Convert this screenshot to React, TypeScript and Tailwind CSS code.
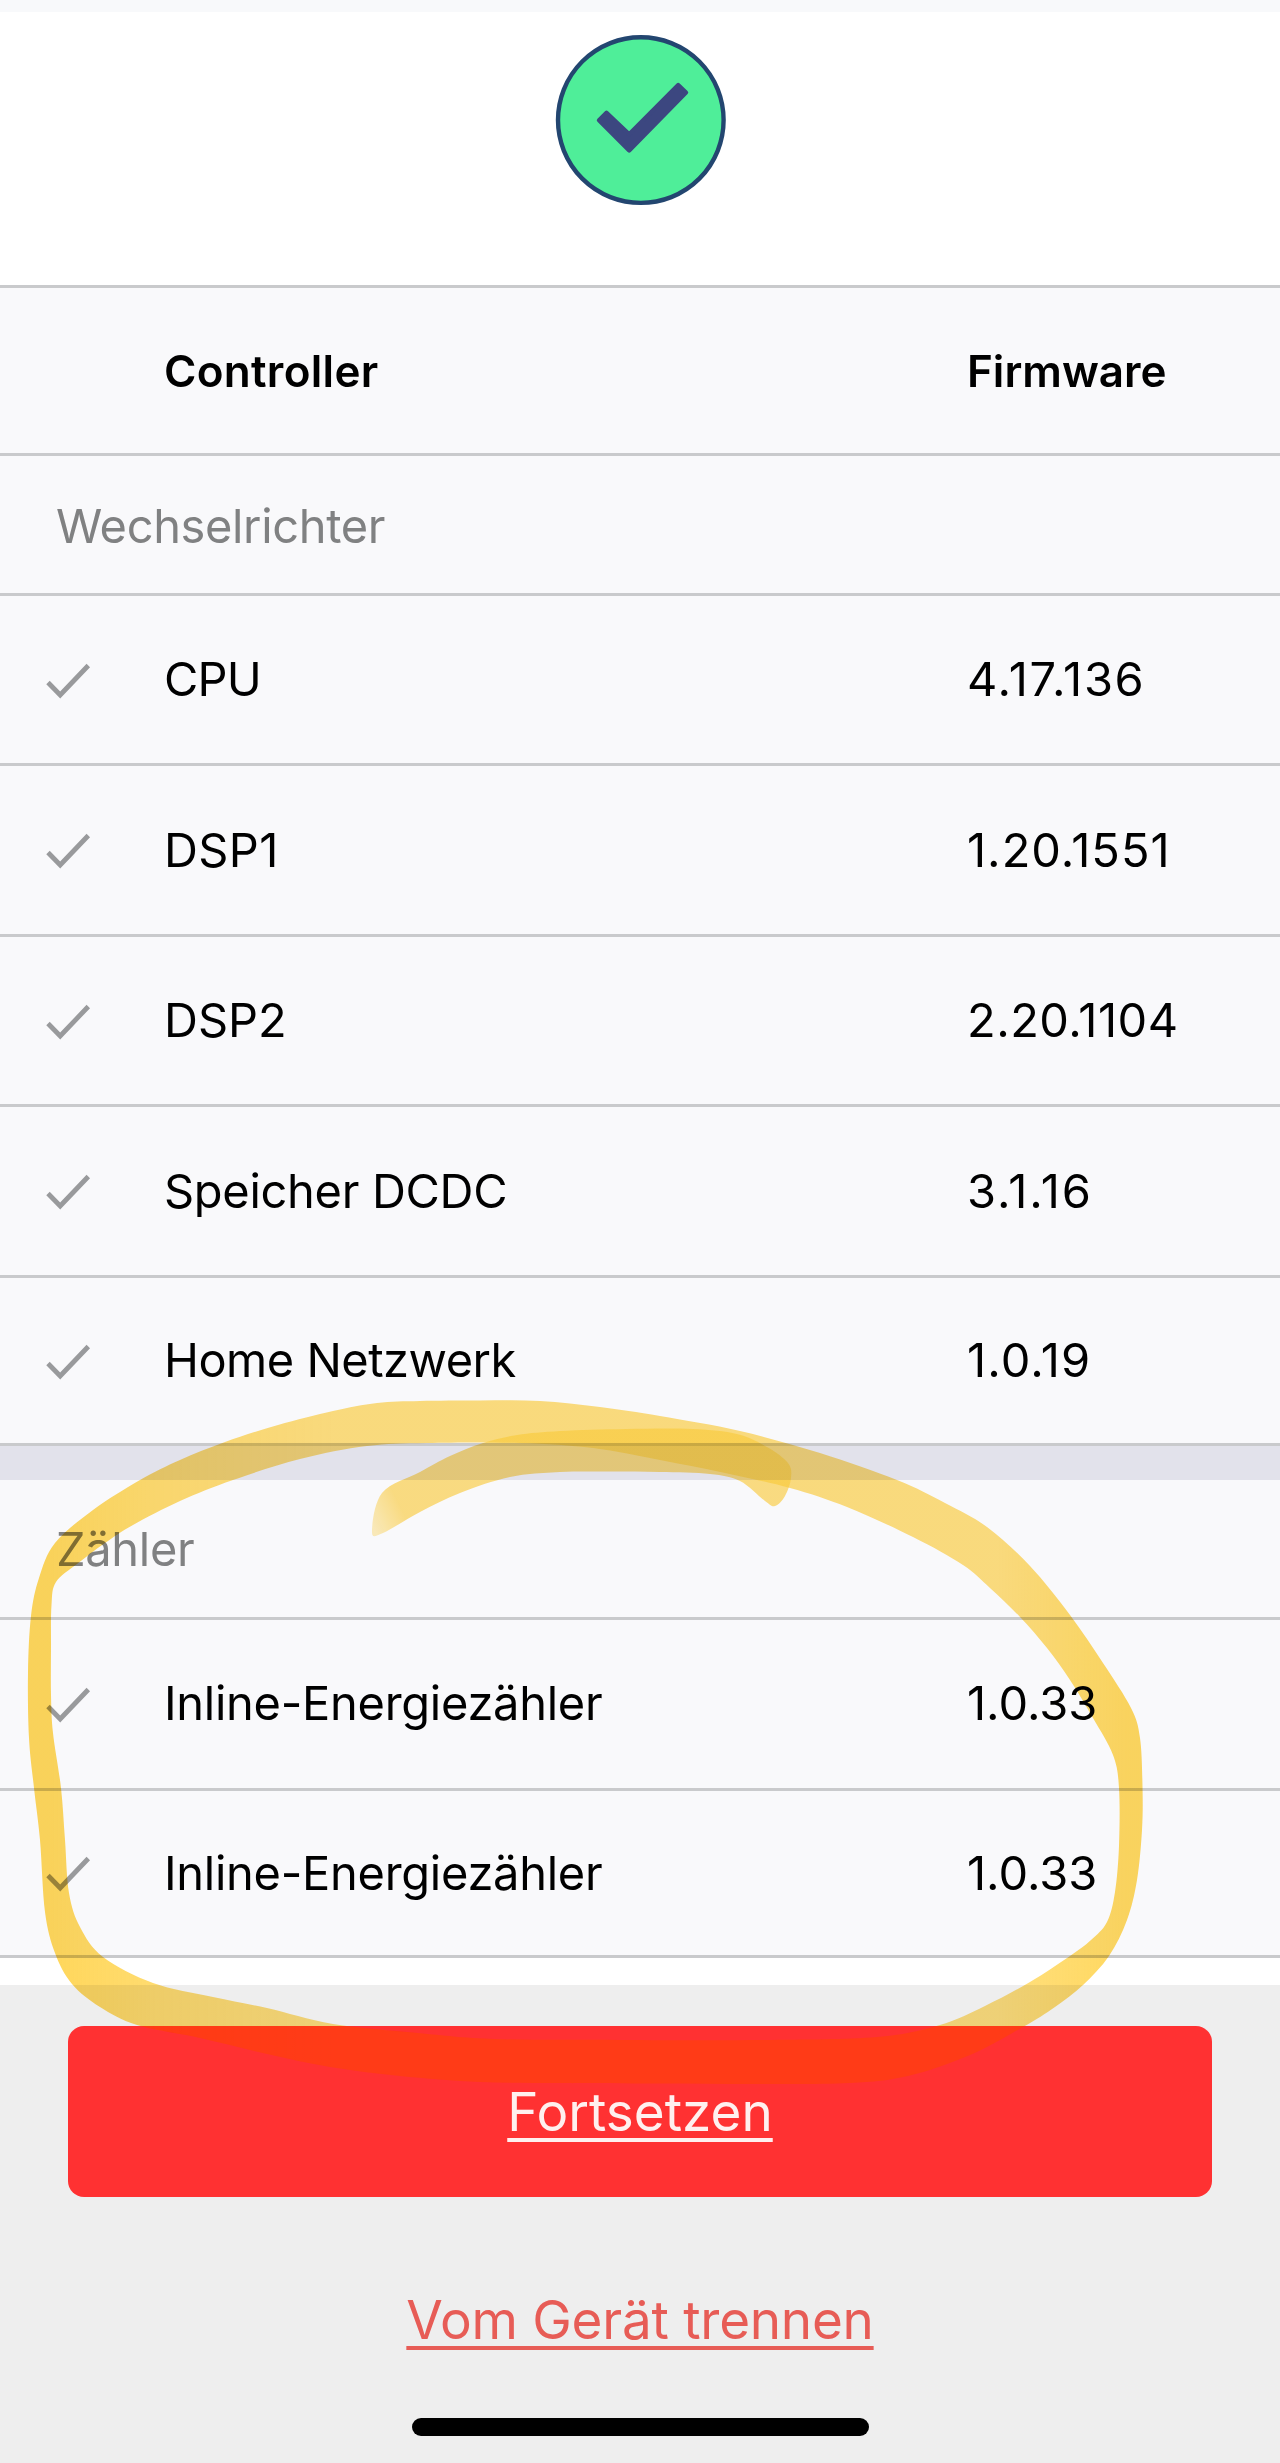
type Point = [number, number];

type Entry = {
  name: string;
  version: string;
  nameClass: string;
  versionClass: string;
  rowClass: string;
};

const inverter: Entry[] = [
  { name: "CPU", version: "4.17.136", nameClass: "tracking-[-0.8px]", versionClass: "tracking-[1.7px]", rowClass: "h-[170px]" },
  { name: "DSP1", version: "1.20.1551", nameClass: "tracking-[0.4px]", versionClass: "tracking-[1px]", rowClass: "h-[171px]" },
  { name: "DSP2", version: "2.20.1104", nameClass: "", versionClass: "tracking-[0.5px]", rowClass: "h-[170px]" },
  { name: "Speicher DCDC", version: "3.1.16", nameClass: "tracking-[-0.3px]", versionClass: "tracking-[1.9px]", rowClass: "h-[171px]" },
  { name: "Home Netzwerk", version: "1.0.19", nameClass: "tracking-[-0.5px]", versionClass: "tracking-[1.1px]", rowClass: "h-[168px]" },
];

const meters: Entry[] = [
  { name: "Inline-Energiezähler", version: "1.0.33", nameClass: "tracking-[-0.27px]", versionClass: "", rowClass: "h-[171px] pb-px" },
  { name: "Inline-Energiezähler", version: "1.0.33", nameClass: "tracking-[-0.27px]", versionClass: "", rowClass: "h-[167px]" },
];

const ringOuter: Point[] = [
  [28, 1673], [31, 1616], [39, 1578], [55, 1543], [93, 1510], [140, 1480], [180, 1460], [225, 1442], [278, 1425], [333, 1411],
  [377, 1403], [420, 1401], [480, 1400.5], [540, 1401], [600, 1407], [660, 1416], [740, 1431], [820, 1453], [897, 1480],
  [945, 1503], [987, 1527], [1030, 1566], [1070, 1615], [1103, 1663], [1131, 1708], [1140, 1738], [1142.5, 1787], [1142, 1830],
  [1137, 1880], [1127, 1920], [1109, 1956], [1083, 1985], [1055, 2007], [1023, 2027], [970, 2055], [908, 2076], [850, 2083],
  [760, 2084], [660, 2083.5], [560, 2083], [480, 2082], [400, 2076], [330, 2067], [267, 2054], [200, 2038], [137, 2025],
  [100, 2007], [72, 1984], [55, 1953], [45, 1912], [40, 1840], [34, 1788], [29, 1738],
];

const ringInner: Point[] = [
  [51, 1650], [51.5, 1605], [56, 1582], [77, 1564], [105, 1543], [133, 1525], [180, 1501], [233, 1480], [300, 1459],
  [367, 1446], [427, 1443], [520, 1443], [593, 1448], [660, 1460], [725, 1473], [790, 1488], [847, 1507], [913, 1537],
  [963, 1565], [990, 1588], [1020, 1617], [1047, 1648], [1070, 1680], [1093, 1718], [1113, 1755], [1119, 1788],
  [1119, 1846], [1115, 1892], [1107, 1922], [1091, 1940], [1070, 1956], [1030, 1982], [985, 2006], [940, 2025], [877, 2037],
  [763, 2040], [620, 2040], [495, 2039], [418, 2033], [333, 2024], [267, 2008], [213, 1997], [153, 1983], [103, 1957],
  [80, 1927], [69, 1893], [65, 1840], [61, 1788], [53, 1733], [51, 1695],
];

const tail: Point[] = [
  [382, 1493], [420, 1472], [450, 1456], [483, 1443], [517, 1435], [560, 1431], [625, 1429], [693, 1429], [737, 1434],
  [767, 1447], [788, 1463], [791, 1478], [785, 1496], [775, 1506], [765, 1501], [740, 1481], [710, 1474], [660, 1472],
  [610, 1471.5], [560, 1472], [510, 1477], [460, 1493], [420, 1512], [383, 1533], [372, 1532],
];

// closed Catmull-Rom curve through all points
function smooth(points: Point[]) {
  const n = points.length;
  let d = `M${points[0][0]} ${points[0][1]}`;
  for (let i = 0; i < n; i++) {
    const a = points[(i - 1 + n) % n];
    const b = points[i];
    const c = points[(i + 1) % n];
    const e = points[(i + 2) % n];
    d += `C${b[0] + (c[0] - a[0]) / 6} ${b[1] + (c[1] - a[1]) / 6} ${c[0] - (e[0] - b[0]) / 6} ${c[1] - (e[1] - b[1]) / 6} ${c[0]} ${c[1]}`;
  }
  return d + "Z";
}

const ringPath = smooth(ringOuter) + smooth(ringInner);

function StatusBadge() {
  return (
    <svg className="ml-px h-[172px] w-[172px]" viewBox="554.5 34.5 172 172">
      <circle cx="640.3" cy="120.6" r="82.8" fill="#4fee99" stroke="#234670" strokeWidth="4.4" />
      <path
        d="M606 113.3L628.7 134.8L677.7 85.5L685.5 93L628.7 151L598.5 120.7Z"
        fill="#3c4780"
        stroke="#3c4780"
        strokeWidth="4.4"
        strokeLinejoin="round"
      />
    </svg>
  );
}

function Row({ entry }: { entry: Entry }) {
  return (
    <div className={`flex items-center border-t-[3px] border-[#c9cacc] text-[47px] leading-none ${entry.rowClass}`}>
      <div className="w-[164px] shrink-0 pl-[46px]">
        <svg className="h-10 w-[46px]" viewBox="0 0 46 40" fill="none">
          <path d="M2 22.5L14.2 35L42.3 5.5" stroke="#999a9c" strokeWidth="4.8" />
        </svg>
      </div>
      <div className={`w-[803px] shrink-0 pb-0.5 ${entry.nameClass}`}>{entry.name}</div>
      <div className={`pb-0.5 ${entry.versionClass}`}>{entry.version}</div>
    </div>
  );
}

function Marker() {
  return (
    <>
      <svg className="pointer-events-none absolute left-0 top-0 h-[2463px] w-[1280px] mix-blend-multiply" viewBox="0 0 1280 2463">
        <defs>
          <linearGradient id="ink" gradientUnits="userSpaceOnUse" x1="0" y1="0" x2="1280" y2="0">
            <stop offset="0.04" stopColor="#ffcf3c" stopOpacity="0.84" />
            <stop offset="0.12" stopColor="#ffcf3c" stopOpacity="0.74" />
            <stop offset="0.26" stopColor="#ffcf3c" stopOpacity="0.66" />
            <stop offset="0.78" stopColor="#ffcf3c" stopOpacity="0.66" />
            <stop offset="0.88" stopColor="#ffcf3c" stopOpacity="0.82" />
          </linearGradient>
          <linearGradient id="tailInk" gradientUnits="userSpaceOnUse" x1="370" y1="1520" x2="400" y2="1505">
            <stop offset="0" stopColor="#ffcf3c" stopOpacity="0.35" />
            <stop offset="1" stopColor="#ffcf3c" stopOpacity="0.64" />
          </linearGradient>
        </defs>
        <path d={ringPath} fill="url(#ink)" fillRule="evenodd" />
        <path d={smooth(tail)} fill="url(#tailInk)" />
      </svg>
      {/* multiply alone goes too dark on the red button */}
      <svg className="pointer-events-none absolute left-0 top-0 h-[2463px] w-[1280px]" viewBox="0 0 1280 2463">
        <clipPath id="button">
          <rect x="68" y="2026" width="1144" height="171" rx="16" />
        </clipPath>
        <path d={ringPath} fill="#ffff00" fillOpacity="0.08" fillRule="evenodd" clipPath="url(#button)" />
      </svg>
    </>
  );
}

export default function App() {
  return (
    <div className="relative flex h-[2463px] w-[1280px] flex-col overflow-hidden bg-white font-['Inter',sans-serif] text-black">
      <div className="h-3 shrink-0 bg-[#f8f9fb]" />
      <header className="flex h-[273px] shrink-0 justify-center pt-[22px]">
        <StatusBadge />
      </header>

      <main className="shrink-0 border-b-[3px] border-[#c9cacc] bg-[#f9f9fb]">
        <div className="flex h-[168px] items-center border-t-[3px] border-[#c9cacc] pl-[164px] text-[44px] font-semibold leading-none">
          <div className="w-[803px] shrink-0 tracking-[0.3px]">Controller</div>
          <div>Firmware</div>
        </div>
        <h2 className="flex h-[140px] items-center border-t-[3px] border-[#c9cacc] pl-14 pt-0.5 text-[47px] leading-none tracking-[-0.35px] text-[#808182]">
          Wechselrichter
        </h2>
        {inverter.map((entry) => (
          <Row key={entry.name} entry={entry} />
        ))}
        <div className="h-[37px] border-t-[3px] border-[#c9cacc] bg-[#e2e2eb]" />
        <h2 className="flex h-[137px] items-center pl-14 text-[47px] leading-none tracking-[-0.3px] text-[#808182]">
          Zähler
        </h2>
        {meters.map((entry, i) => (
          <Row key={i} entry={entry} />
        ))}
      </main>

      <footer className="mt-[27px] flex flex-1 flex-col items-center bg-[#eeeeee] pt-[41px] text-[53px] leading-none">
        <button className="flex h-[171px] w-[1144px] items-center justify-center rounded-2xl bg-[#ff3132] pt-px text-[#fff0ef]">
          <span className="underline decoration-[3.5px] underline-offset-[7px]">Fortsetzen</span>
        </button>
        <a className="mt-[97px] tracking-[-0.25px] text-[#e75c56] underline decoration-[3.5px] underline-offset-[7px]">
          Vom Gerät trennen
        </a>
        <div className="mb-[27px] mt-auto h-[18px] w-[457px] rounded-full bg-black" />
      </footer>

      <Marker />
    </div>
  );
}
